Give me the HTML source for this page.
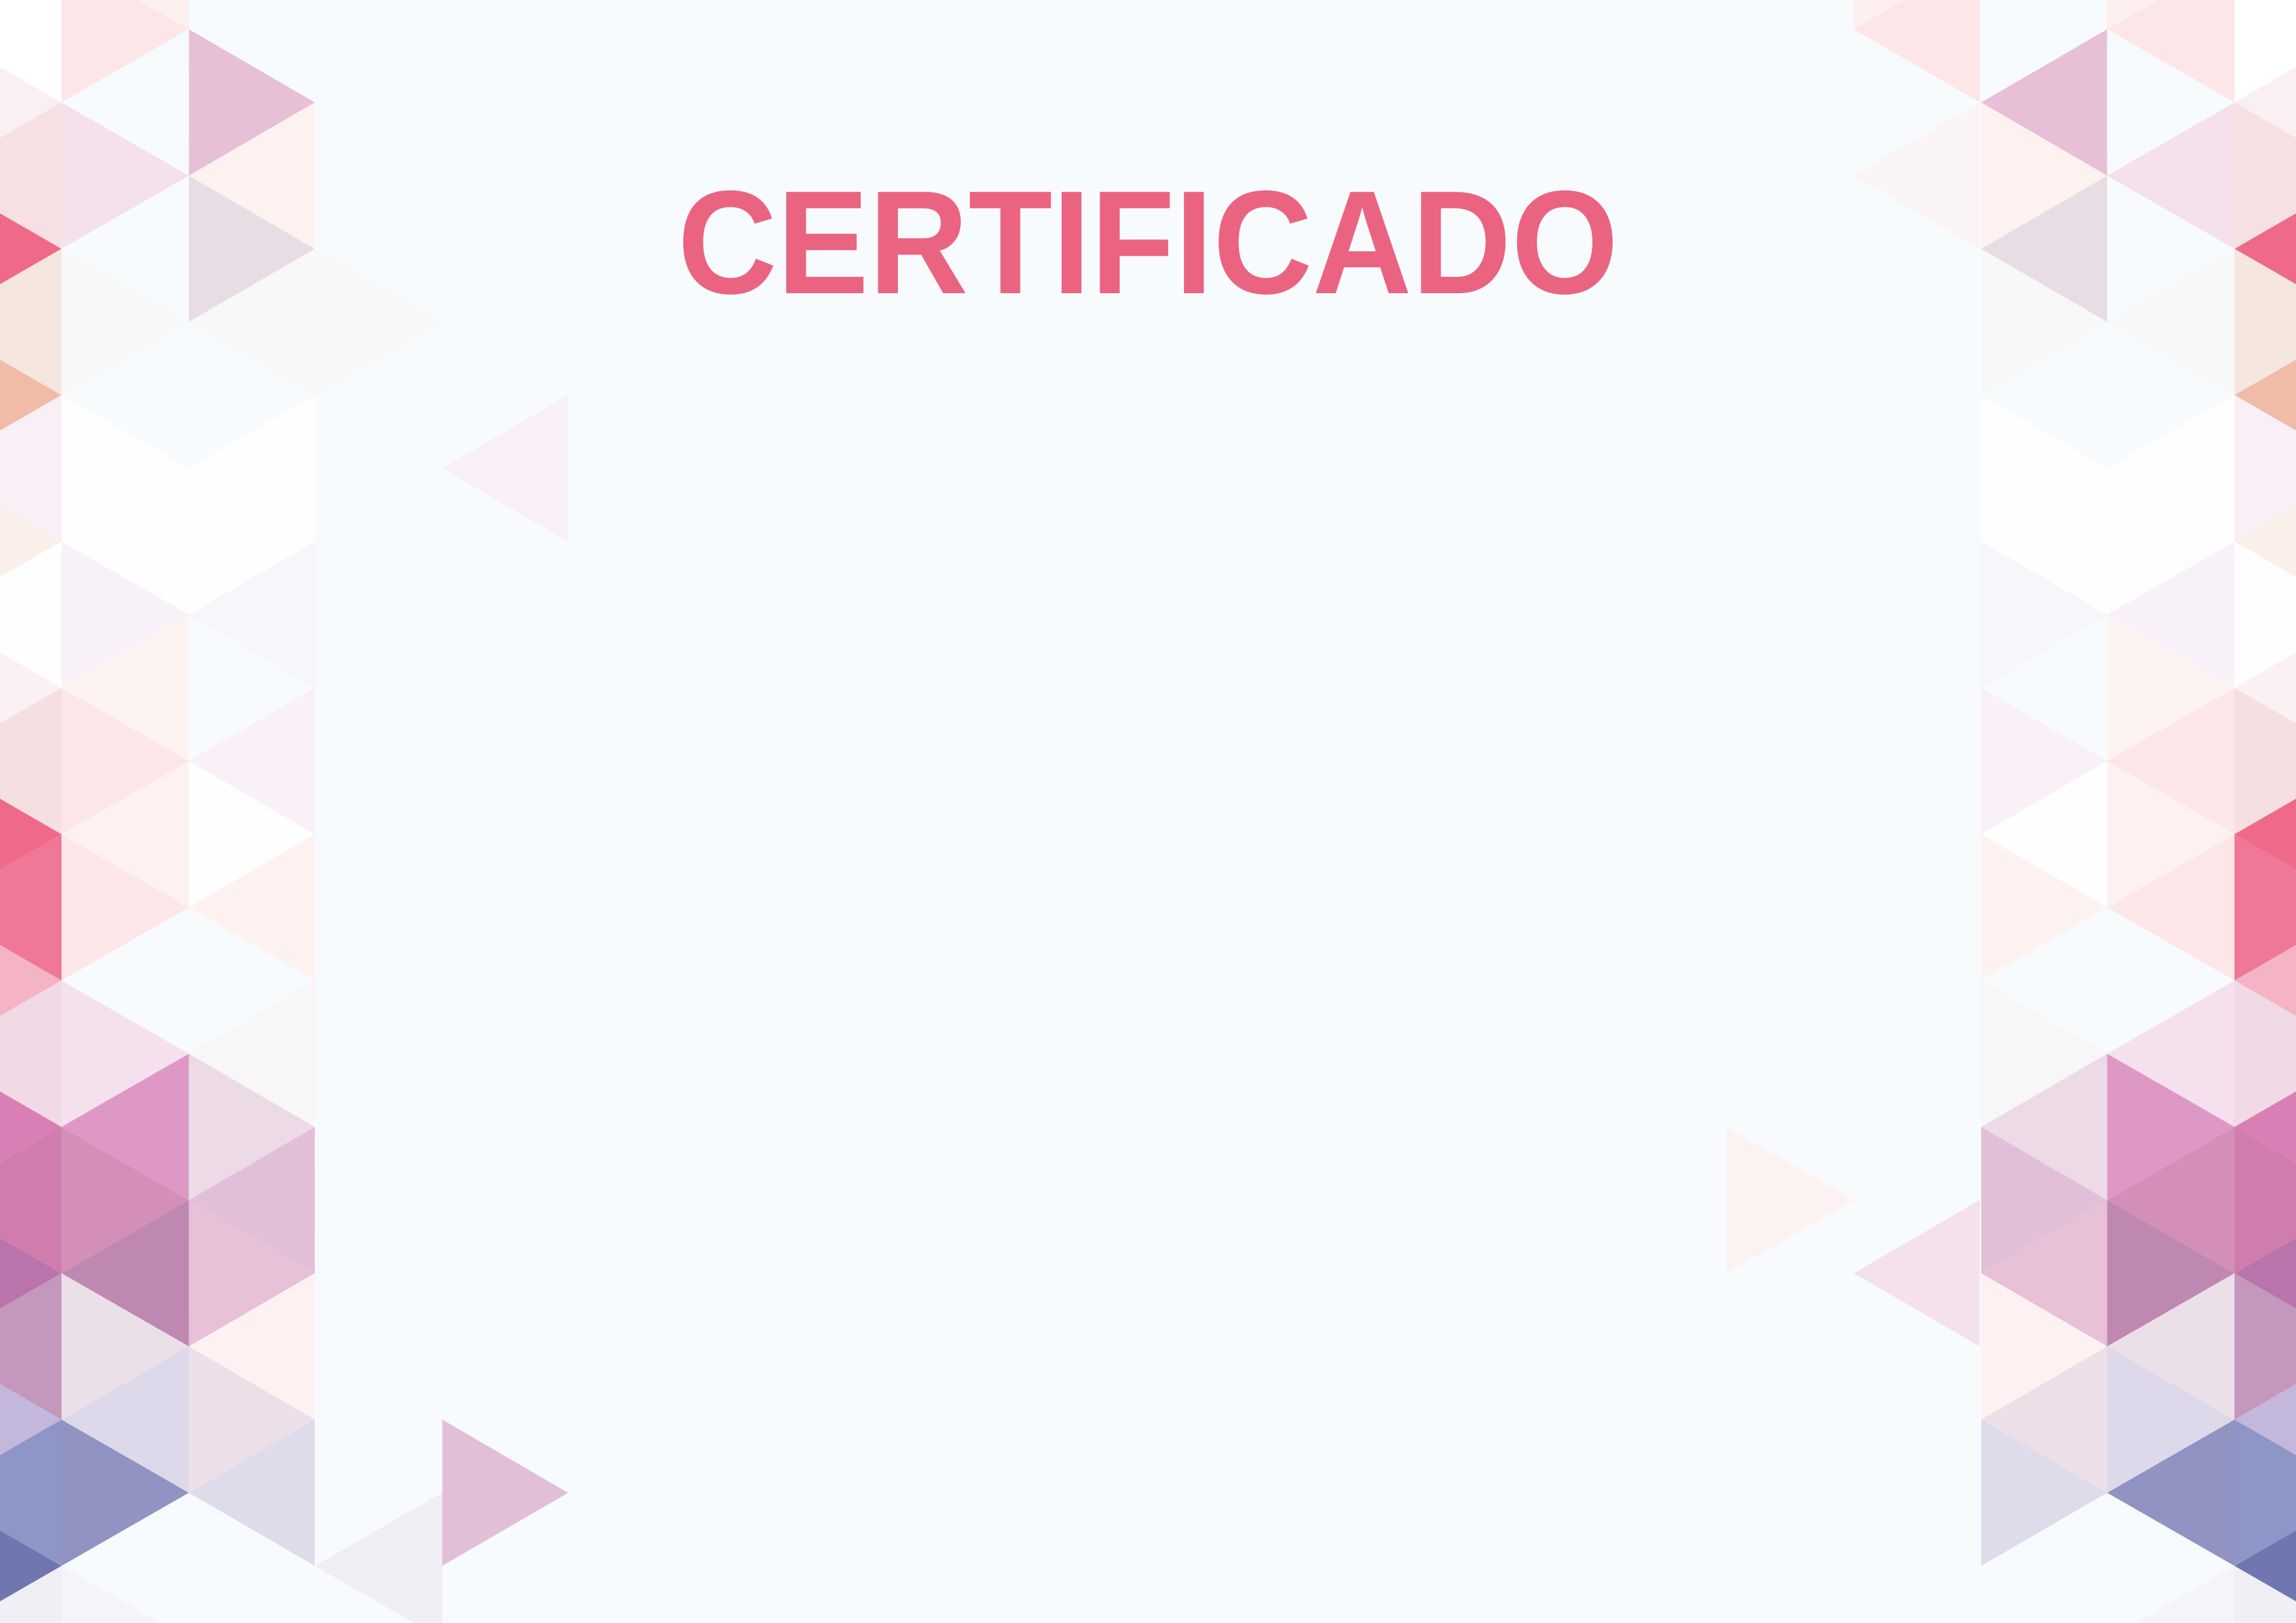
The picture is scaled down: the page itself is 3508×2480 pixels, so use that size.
<!DOCTYPE html>
<html><head><meta charset="utf-8">
<style>
html{margin:0;padding:0;width:3508px;height:2480px;overflow:hidden;}
body{margin:0;padding:0;width:3508px;height:2480px;overflow:hidden;background:#f7fbfd;position:relative;}
svg{position:absolute;left:0;top:0;display:block;}
.t{position:absolute;left:0;width:3508px;top:250px;height:240px;text-align:center;font-family:"Liberation Sans",sans-serif;font-weight:bold;font-size:225px;line-height:240px;color:#ea6481;transform:scaleX(0.935);transform-origin:1754px 0;white-space:nowrap;}
</style></head><body>
<svg width="3508" height="2480" viewBox="0 0 1568 1109" preserveAspectRatio="none">
<defs>
<g id="L">
<polygon points="-44.6,-80 42,-30 -44.6,20" fill="#ffffff"/>
<polygon points="-44.6,20 42,70 -44.6,120" fill="#fbf0f1"/>
<polygon points="-44.6,120 42,170 -44.6,220" fill="#ee6a88"/>
<polygon points="-44.6,220 42,270 -44.6,320" fill="#f0bca8"/>
<polygon points="-44.6,320 42,370 -44.6,420" fill="#faefe9"/>
<polygon points="-44.6,420 42,470 -44.6,520" fill="#fbf1f2"/>
<polygon points="-44.6,520 42,570 -44.6,620" fill="#ee6a88"/>
<polygon points="-44.6,620 42,670 -44.6,720" fill="#f5b4c6"/>
<polygon points="-44.6,720 42,770 -44.6,820" fill="#d97fb5"/>
<polygon points="-44.6,820 42,870 -44.6,920" fill="#b974ac"/>
<polygon points="-44.6,920 42,970 -44.6,1020" fill="#c4b7dc"/>
<polygon points="-44.6,1020 42,1070 -44.6,1120" fill="#6f76b0"/>
<polygon points="42,-30 42,70 -44.6,20" fill="#ffffff"/>
<polygon points="42,70 42,170 -44.6,120" fill="#f6e0e3"/>
<polygon points="42,170 42,270 -44.6,220" fill="#f5e6df"/>
<polygon points="42,270 42,370 -44.6,320" fill="#f8f0f6"/>
<polygon points="42,370 42,470 -44.6,420" fill="#fefefe"/>
<polygon points="42,470 42,570 -44.6,520" fill="#f5dfe2"/>
<polygon points="42,570 42,670 -44.6,620" fill="#ef7896"/>
<polygon points="42,670 42,770 -44.6,720" fill="#f1d9e6"/>
<polygon points="42,770 42,870 -44.6,820" fill="#d07dae"/>
<polygon points="42,870 42,970 -44.6,920" fill="#c497bc"/>
<polygon points="42,970 42,1070 -44.6,1020" fill="#8e96c7"/>
<polygon points="42,1070 42,1170 -44.6,1120" fill="#f0eff6"/>
<polygon points="42,-30 129,20 42,70" fill="#fde6e8"/>
<polygon points="42,70 129,120 42,170" fill="#f4e1ec"/>
<polygon points="42,170 129,220 42,270" fill="#f8f8f8"/>
<polygon points="42,270 129,320 42,370" fill="#fefefe"/>
<polygon points="42,370 129,420 42,470" fill="#f9f1f9"/>
<polygon points="42,470 129,520 42,570" fill="#fde6e8"/>
<polygon points="42,570 129,620 42,670" fill="#fde6e8"/>
<polygon points="42,670 129,720 42,770" fill="#f5e1ee"/>
<polygon points="42,770 129,820 42,870" fill="#d48fb7"/>
<polygon points="42,870 129,920 42,970" fill="#ebdfe8"/>
<polygon points="42,970 129,1020 42,1070" fill="#9193c2"/>
<polygon points="42,1070 129,1120 42,1170" fill="#f4f4f9"/>
<polygon points="129,-80 129,20 42,-30" fill="#fdf0ee"/>
<polygon points="129,20 129,120 42,70" fill="#f7fbfd"/>
<polygon points="129,320 129,420 42,370" fill="#fefefe"/>
<polygon points="129,420 129,520 42,470" fill="#fdf3f0"/>
<polygon points="129,520 129,620 42,570" fill="#fdf2f1"/>
<polygon points="129,720 129,820 42,770" fill="#de98c6"/>
<polygon points="129,820 129,920 42,870" fill="#bf88b0"/>
<polygon points="129,920 129,1020 42,970" fill="#ddd9ea"/>
<polygon points="129,20 215,70 129,120" fill="#e7bfd7"/>
<polygon points="129,120 215,170 129,220" fill="#e9dde5"/>
<polygon points="129,320 215,370 129,420" fill="#fefefe"/>
<polygon points="129,520 215,570 129,620" fill="#fefefe"/>
<polygon points="129,720 215,770 129,820" fill="#ecdbe6"/>
<polygon points="129,820 215,870 129,920" fill="#e8c0d8"/>
<polygon points="129,920 215,970 129,1020" fill="#ecdfe7"/>
<polygon points="215,70 215,170 129,120" fill="#fdf2f0"/>
<polygon points="215,170 215,270 129,220" fill="#f8f8f8"/>
<polygon points="215,270 215,370 129,320" fill="#fefefe"/>
<polygon points="215,370 215,470 129,420" fill="#f7f6fb"/>
<polygon points="215,470 215,570 129,520" fill="#f9f0f8"/>
<polygon points="215,570 215,670 129,620" fill="#fdf2f0"/>
<polygon points="215,670 215,770 129,720" fill="#f8f7f8"/>
<polygon points="215,770 215,870 129,820" fill="#e2bfd9"/>
<polygon points="215,870 215,970 129,920" fill="#fdf2f1"/>
<polygon points="215,970 215,1070 129,1020" fill="#dedbeb"/>
</g>
</defs>
<use href="#L"/>
<use href="#L" transform="translate(1568,0) scale(-1,1)"/>
<polygon points="215,170 302,220 215,270" fill="#f8f8f8"/>
<polygon points="302,1020 302,1120 215,1070" fill="#f0eef4"/>
<polygon points="388,270 388,370 302,320" fill="#f9eff7"/>
<polygon points="302,970 388,1020 302,1070" fill="#e2bfd9"/>
<polygon points="1352,-30 1352,70 1266,20" fill="#fde6e8"/>
<polygon points="1266,-80 1266,20 1352,-30" fill="#fdf0ee"/>
<polygon points="1352,70 1352,170 1266,120" fill="#fbf4f4"/>
<polygon points="1352,820 1352,920 1266,870" fill="#f4e1ec"/>
<polygon points="1179,770 1266,820 1179,870" fill="#fdf2f2"/>
</svg>
<div class="t">CERTIFICADO</div>
</body></html>
